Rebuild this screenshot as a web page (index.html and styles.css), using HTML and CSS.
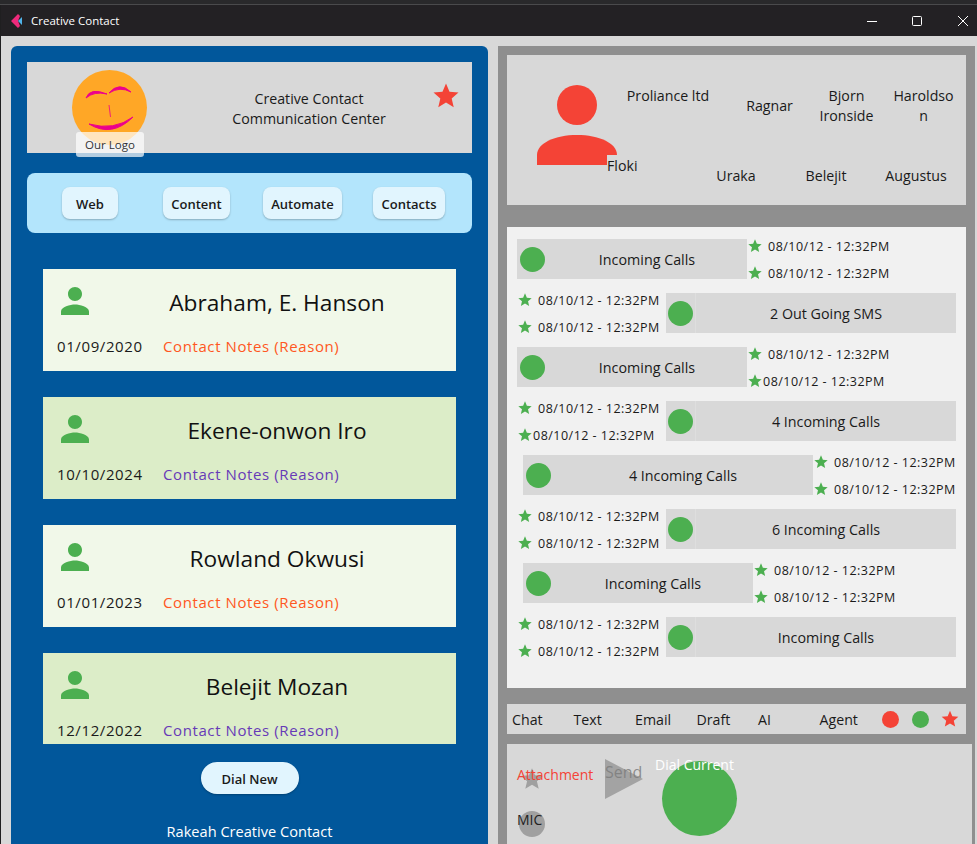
FILE: index.html
```html
<!DOCTYPE html>
<html lang="en">
<head>
    <meta charset="UTF-8">
    <meta name="viewport" content="width=device-width, initial-scale=1.0">
    <title>Creative Contact</title>
    <link rel="stylesheet" href="styles.css">
</head>
<body>
    <svg class="defs" width="0" height="0">
        <symbol id="star" viewBox="0 0 24 24"><path d="M12 17.27 18.18 21l-1.64-7.03L22 9.24l-7.19-.61L12 2 9.19 8.63 2 9.24l5.46 4.73L5.82 21z"/></symbol>
        <symbol id="person" viewBox="0 0 24 24"><path d="M12 12c2.21 0 4-1.79 4-4s-1.79-4-4-4-4 1.79-4 4 1.79 4 4 4zm0 2c-2.67 0-8 1.34-8 4v2h16v-2c0-2.66-5.33-4-8-4z"/></symbol>
    </svg>
    <div class="topstrip"></div>
    <div class="window">
        <header class="titlebar">
            <svg class="applogo" width="12" height="14" viewBox="0 0 12 14">
                <path d="M0 7 7 0 9 2 7 7 9 12 7 14z" fill="#ee2a7b"/>
                <path d="M7 7 11 3V11z" fill="#4fb3e8"/>
            </svg>
            <span class="apptitle">Creative Contact</span>
            <div class="controls">
                <svg width="10" height="10" viewBox="0 0 10 10"><path d="M0 5.5H10" stroke="#fff"/></svg>
                <svg width="10" height="10" viewBox="0 0 10 10"><rect x=".5" y=".5" width="9" height="9" rx="1" fill="none" stroke="#fff"/></svg>
                <svg width="10" height="10" viewBox="0 0 10 10"><path d="M0 0 10 10M10 0 0 10" stroke="#fff"/></svg>
            </div>
        </header>
        <main class="content">
            <section class="left">
                <div class="brand">
                    <div class="logo">
                        <svg width="75" height="75" viewBox="72 70 75 75">
                            <circle cx="109.5" cy="107.5" r="37.5" fill="#ffa726"/>
                            <g fill="#ec008c" stroke="#ec008c" stroke-width="1" stroke-linejoin="round">
                                <path d="M86 98Q90 87 107 94Q94 91 86 98z"/>
                                <path d="M109 93Q119 81 131 92Q120 86 109 93z"/>
                                <path d="M109 105 110.5 117" stroke-width=".8"/>
                                <path d="M89 124Q112 138 133 117Q114 131 89 124z"/>
                            </g>
                        </svg>
                        <span class="chip">Our Logo</span>
                    </div>
                    <p class="brandname">Creative Contact<br>Communication Center</p>
                    <svg class="brandstar red" width="30" height="30"><use href="#star"/></svg>
                </div>
                <nav class="nav">
                    <button class="navbtn w-web">Web</button>
                    <button class="navbtn w-content">Content</button>
                    <button class="navbtn w-auto">Automate</button>
                    <button class="navbtn w-contacts">Contacts</button>
                </nav>
                <div class="cards">
                    <article class="card pale">
                        <div class="cardtop">
                            <svg class="green" width="42" height="42"><use href="#person"/></svg>
                            <h2 class="name">Abraham, E. Hanson</h2>
                        </div>
                        <div class="cardbottom"><span class="date">01/09/2020</span><span class="notes">Contact Notes (Reason)</span></div>
                    </article>
                    <article class="card deep">
                        <div class="cardtop">
                            <svg class="green" width="42" height="42"><use href="#person"/></svg>
                            <h2 class="name">Ekene-onwon Iro</h2>
                        </div>
                        <div class="cardbottom"><span class="date">10/10/2024</span><span class="notes">Contact Notes (Reason)</span></div>
                    </article>
                    <article class="card pale">
                        <div class="cardtop">
                            <svg class="green" width="42" height="42"><use href="#person"/></svg>
                            <h2 class="name">Rowland Okwusi</h2>
                        </div>
                        <div class="cardbottom"><span class="date">01/01/2023</span><span class="notes">Contact Notes (Reason)</span></div>
                    </article>
                    <article class="card deep">
                        <div class="cardtop">
                            <svg class="green" width="42" height="42"><use href="#person"/></svg>
                            <h2 class="name">Belejit Mozan</h2>
                        </div>
                        <div class="cardbottom"><span class="date">12/12/2022</span><span class="notes">Contact Notes (Reason)</span></div>
                    </article>
                </div>
                <button class="dialnew">Dial New</button>
                <p class="footer">Rakeah Creative Contact</p>
            </section>
            <section class="right">
                <div class="contacts">
                    <svg class="avatar red" width="80" height="80" viewBox="0 0 80 80">
                        <circle cx="40" cy="20" r="20"/>
                        <path d="M0 80V70C0 58 18 50 40 50S80 58 80 70V80z"/>
                    </svg>
                    <div class="names">
                        <div class="namerow top">
                            <span>Proliance ltd</span>
                            <span class="mid">Ragnar</span>
                            <span>Bjorn<br>Ironside</span>
                            <span>Haroldso<br>n</span>
                        </div>
                        <div class="namerow bottom">
                            <span class="floki">Floki</span>
                            <span class="low">Uraka</span>
                            <span class="low">Belejit</span>
                            <span class="low">Augustus</span>
                        </div>
                    </div>
                </div>
                <div class="list">
                    <div class="row">
                        <div class="pill"><i class="dot"></i><span>Incoming Calls</span></div>
                        <div class="times"><div class="time"><svg class="green" width="16" height="16"><use href="#star"/></svg>08/10/12 - 12:32PM</div><div class="time"><svg class="green" width="16" height="16"><use href="#star"/></svg>08/10/12 - 12:32PM</div></div>
                    </div>
                    <div class="row">
                        <div class="times left-times"><div class="time"><svg class="green" width="16" height="16"><use href="#star"/></svg>08/10/12 - 12:32PM</div><div class="time"><svg class="green" width="16" height="16"><use href="#star"/></svg>08/10/12 - 12:32PM</div></div>
                        <div class="pill wide"><i class="dot"></i><span>2 Out Going SMS</span></div>
                    </div>
                    <div class="row">
                        <div class="pill"><i class="dot"></i><span>Incoming Calls</span></div>
                        <div class="times"><div class="time"><svg class="green" width="16" height="16"><use href="#star"/></svg>08/10/12 - 12:32PM</div><div class="time tight"><svg class="green" width="16" height="16"><use href="#star"/></svg>08/10/12 - 12:32PM</div></div>
                    </div>
                    <div class="row">
                        <div class="times left-times"><div class="time"><svg class="green" width="16" height="16"><use href="#star"/></svg>08/10/12 - 12:32PM</div><div class="time tight"><svg class="green" width="16" height="16"><use href="#star"/></svg>08/10/12 - 12:32PM</div></div>
                        <div class="pill wide"><i class="dot"></i><span>4 Incoming Calls</span></div>
                    </div>
                    <div class="row shift">
                        <div class="pill wide"><i class="dot"></i><span>4 Incoming Calls</span></div>
                        <div class="times"><div class="time"><svg class="green" width="16" height="16"><use href="#star"/></svg>08/10/12 - 12:32PM</div><div class="time"><svg class="green" width="16" height="16"><use href="#star"/></svg>08/10/12 - 12:32PM</div></div>
                    </div>
                    <div class="row">
                        <div class="times left-times"><div class="time"><svg class="green" width="16" height="16"><use href="#star"/></svg>08/10/12 - 12:32PM</div><div class="time"><svg class="green" width="16" height="16"><use href="#star"/></svg>08/10/12 - 12:32PM</div></div>
                        <div class="pill wide"><i class="dot"></i><span>6 Incoming Calls</span></div>
                    </div>
                    <div class="row shift">
                        <div class="pill"><i class="dot"></i><span>Incoming Calls</span></div>
                        <div class="times"><div class="time"><svg class="green" width="16" height="16"><use href="#star"/></svg>08/10/12 - 12:32PM</div><div class="time"><svg class="green" width="16" height="16"><use href="#star"/></svg>08/10/12 - 12:32PM</div></div>
                    </div>
                    <div class="row">
                        <div class="times left-times"><div class="time"><svg class="green" width="16" height="16"><use href="#star"/></svg>08/10/12 - 12:32PM</div><div class="time"><svg class="green" width="16" height="16"><use href="#star"/></svg>08/10/12 - 12:32PM</div></div>
                        <div class="pill wide"><i class="dot"></i><span>Incoming Calls</span></div>
                    </div>
                </div>
                <div class="tabs">
                    <span class="tab">Chat</span>
                    <span class="tab">Text</span>
                    <span class="tab">Email</span>
                    <span class="tab">Draft</span>
                    <span class="tab">AI</span>
                    <span class="tab">Agent</span>
                    <i class="light redbg"></i>
                    <i class="light greenbg"></i>
                    <svg class="red" width="20" height="20"><use href="#star"/></svg>
                </div>
                <div class="composer">
                    <div class="tools">
                        <div class="stack attach">
                            <svg class="grey" width="26" height="26"><use href="#star"/></svg>
                            <span class="attachtext">Attachment</span>
                        </div>
                        <div class="stack mic">
                            <i class="micdot"></i>
                            <span class="mictext">MIC</span>
                        </div>
                    </div>
                    <div class="stack send">
                        <svg class="sendtri" width="38" height="40" viewBox="0 0 38 40"><path d="M0 0 38 20 0 40z"/></svg>
                        <span class="sendtext">Send</span>
                    </div>
                    <div class="stack dial">
                        <i class="dialdot"></i>
                        <span class="dialtext">Dial Current</span>
                    </div>
                </div>
            </section>
        </main>
    </div>
</body>
</html>
```

FILE: styles.css
```css
*{
    margin:0px;
    padding:0px;
    box-sizing:border-box;
}
html,body{
    height:844px;
    overflow:hidden;
}
body{
    background-color:#1f1f20;
    font-family:"Open Sans","Noto Sans",sans-serif;
    font-size:14px;
    color:#1a1a1a;
}
.defs{
    position:absolute;
}
.red{ fill:#f44336; }
.green{ fill:#4caf50; }
.grey{ fill:#a0a0a0; }
.topstrip{
    height:5px;
    background-color:#29292b;
    border-bottom:1px solid #4a4a4c;
}
.window{
    margin-left:1px;
    height:839px;
    display:flex;
    flex-direction:column;
}
.titlebar{
    height:31px;
    flex:none;
    background-color:#232124;
    display:flex;
    align-items:center;
    padding-left:10px;
    color:#fff;
}
.apptitle{
    font-size:11.5px;
    margin-left:8px;
}
.controls{
    margin-left:auto;
    display:flex;
    gap:35.5px;
    padding-right:9.5px;
}
.content{
    flex:1;
    background-color:#d8d8d8;
    display:flex;
    gap:10px;
    padding:10px 1px 0 10px;
    min-height:0;
}

/* left side */
.left{
    width:477px;
    background-color:#01579b;
    border-radius:6px 6px 0 0;
    padding:16px 16px 0;
    display:flex;
    flex-direction:column;
    align-items:center;
}
.brand{
    width:445px;
    height:91px;
    flex:none;
    background-color:#d8d8d8;
    display:flex;
    align-items:flex-start;
}
.logo{
    margin:8px 0 0 45px;
    width:75px;
    height:75px;
    position:relative;
}
.logo svg{
    display:block;
}
.chip{
    position:absolute;
    left:4px;
    top:62px;
    width:68px;
    height:25px;
    border-radius:3px;
    background-color:rgba(255,255,255,.7);
    font-size:11.5px;
    color:#333;
    display:flex;
    align-items:center;
    justify-content:center;
}
.brandname{
    width:250px;
    margin:27px 0 0 37px;
    text-align:center;
    font-size:14.2px;
    line-height:20px;
}
.brandstar{
    margin:19px 0 0 -3px;
}
.nav{
    width:445px;
    height:60px;
    flex:none;
    margin-top:20px;
    background-color:#b3e5fc;
    border-radius:8px;
    display:flex;
    align-items:center;
    padding-left:35px;
}
.navbtn,.dialnew{
    border:none;
    background-color:#e1f5fe;
    height:32px;
    padding-top:1px;
    font-family:inherit;
    font-size:13px;
    font-weight:600;
    color:#1a1a1a;
    box-shadow:0 1px 2px rgba(0,0,0,.25);
}
.navbtn{
    border-radius:8px;
}
.w-web{ width:56px; }
.w-content{ width:67px; margin-left:45px; }
.w-auto{ width:79px; margin-left:33px; }
.w-contacts{ width:72px; margin-left:31px; }
.cards{
    width:413px;
    height:475px;
    flex:none;
    margin-top:36px;
    overflow:hidden;
    display:flex;
    flex-direction:column;
    gap:26px;
}
.card{
    height:102px;
    flex:none;
    padding:10px 14px 0;
}
.pale{ background-color:#f1f8e9; }
.deep{ background-color:#dcedc8; }
.cardtop{
    display:flex;
    align-items:center;
    height:48px;
}
.cardtop svg{
    flex:none;
    margin:1px 0 0 -3px;
    align-self:flex-start;
}
.name{
    flex:1;
    text-align:center;
    font-size:22.7px;
    font-weight:400;
    color:#111;
    padding-left:16px;
    margin-top:-2px;
}
.cardbottom{
    margin-top:9px;
    display:flex;
    font-size:15px;
    letter-spacing:.6px;
    line-height:20px;
}
.date{
    width:106px;
}
.pale .notes{ color:#ff5722; }
.deep .notes{ color:#673ab7; }
.dialnew{
    margin-top:18px;
    width:98px;
    flex:none;
    border-radius:16px;
}
.footer{
    margin-top:27px;
    color:#fff;
    font-size:14.6px;
    line-height:20px;
}

/* right side */
.right{
    width:477px;
    background-color:#8f8f8f;
    padding:9px 0 0 9px;
}
.contacts{
    width:459px;
    height:150px;
    background-color:#d8d8d8;
    display:flex;
}
.avatar{
    flex:none;
    margin:30px 0 0 30px;
}
.names{
    margin-left:-10px;
    flex:1;
    font-size:14.2px;
    line-height:20px;
}
.namerow{
    display:grid;
    text-align:center;
}
.top{
    grid-template-columns:122px 81px 73px 81px;
    height:40px;
    margin-top:31px;
}
.mid{
    align-self:center;
}
.bottom{
    grid-template-columns:84px 90px 90px 90px;
    margin-top:30px;
}
.floki{
    background-color:#d8d8d8;
    text-align:left;
    height:20px;
    margin-top:-1px;
    padding-top:1px;
}
.low{
    margin-top:10px;
}
.list{
    width:459px;
    height:461px;
    margin-top:22px;
    background-color:#f1f1f1;
    padding-top:12px;
    display:flex;
    flex-direction:column;
    gap:14px;
}
.row{
    height:40px;
    flex:none;
    display:flex;
    align-items:center;
    padding-left:10px;
}
.shift{
    padding-left:16px;
}
.pill{
    width:230px;
    height:40px;
    background-color:#d8d8d8;
    display:flex;
    align-items:center;
    font-size:14.3px;
}
.pill.wide{
    width:290px;
}
.dot{
    width:30px;
    height:40px;
    flex:none;
    padding-top:7.5px;
}
.dot::before{
    content:"";
    display:block;
    width:25px;
    height:25px;
    margin-left:3px;
    border-radius:50%;
    background-color:#4caf50;
}
.left-times + .pill .dot{
    border-right:1px solid #dedede;
}
.left-times + .pill .dot::before{
    margin-left:2px;
}
.pill span{
    flex:1;
    text-align:center;
}
.times{
    display:flex;
    flex-direction:column;
    gap:7px;
    font-size:12.5px;
    letter-spacing:.48px;
    padding-top:1px;
}
.left-times{
    width:149px;
    flex:none;
}
.time{
    height:20px;
    display:flex;
    align-items:center;
    white-space:nowrap;
}
.time svg{
    margin-right:5px;
    flex:none;
    margin-top:-1px;
}
.time.tight svg{
    margin-right:0;
}
.tabs{
    width:459px;
    height:30px;
    margin-top:16px;
    background-color:#d8d8d8;
    display:flex;
    align-items:center;
    padding-left:5px;
    font-size:14.2px;
}
.tab{
    width:61.5px;
    flex:none;
}
.light{
    width:17px;
    height:17px;
    border-radius:50%;
    margin-right:13px;
    flex:none;
}
.redbg{
    background-color:#f44336;
    margin-left:1px;
}
.greenbg{ background-color:#4caf50; }
.tabs svg{
    margin-left:-2px;
}
.composer{
    width:465px;
    height:100px;
    margin-top:10px;
    background-color:#d8d8d8;
    display:flex;
    align-items:flex-start;
    padding:15px 0 0 10px;
}
.stack{
    display:grid;
}
.stack > *{
    grid-area:1/1;
}
.tools{
    width:88px;
    flex:none;
    margin-top:5px;
    font-size:14px;
    line-height:20px;
}
.attach{
    height:30px;
    align-items:center;
}
.attach svg{
    margin:0 0 0 2px;
}
.attachtext{
    color:#f44336;
    margin-top:-8px;
}
.mic{
    margin-top:16px;
}
.micdot{
    width:26px;
    height:26px;
    margin:1px 0 0 2px;
    border-radius:50%;
    background-color:#a0a0a0;
}
.mictext{
    color:#222;
}
.send{
    width:57px;
    flex:none;
}
.sendtext{
    color:rgba(125,125,125,.85);
    font-size:16px;
    margin-top:2px;
    line-height:22px;
}
.sendtri{
    fill:#a3a3a3;
}
.dial{
    width:75px;
    flex:none;
    margin-top:-4px;
}
.dialdot{
    width:75px;
    height:75px;
    margin-top:6px;
    border-radius:50%;
    background-color:#4caf50;
}
.dialtext{
    color:#fff;
    white-space:nowrap;
    margin-left:-7px;
    font-size:14px;
    line-height:20px;
    height:20px;
}
```
